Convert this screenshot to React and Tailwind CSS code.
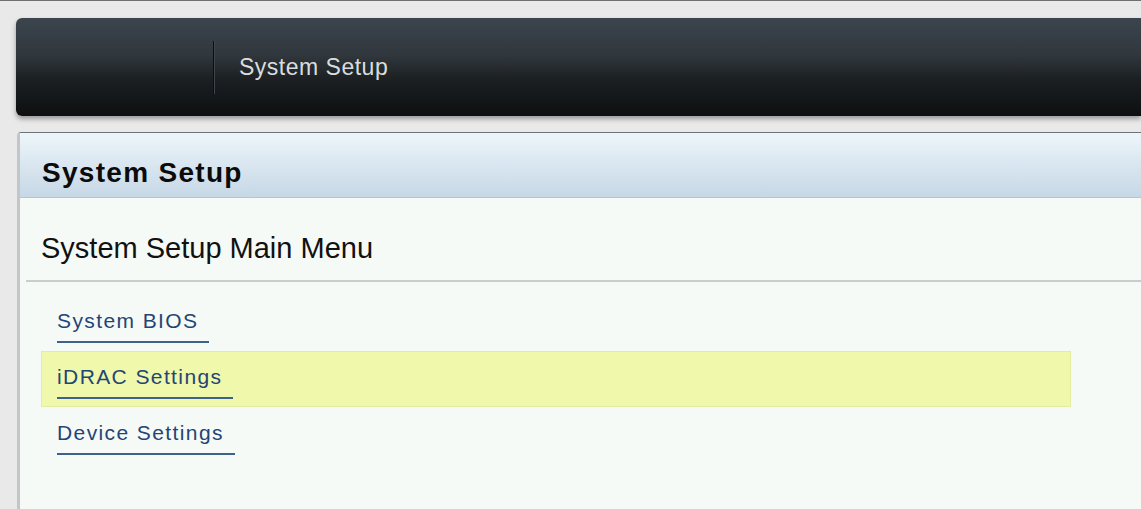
import React from "react";

const items = [
  { label: "System BIOS", active: false },
  { label: "iDRAC Settings", active: true },
  { label: "Device Settings", active: false },
];

function MenuItem({ label, active }) {
  return (
    <div
      className={
        active
          ? "h-[56px] w-[1030px] pl-[16px] pt-[14px] bg-[#eff8ab] outline outline-1 -outline-offset-1 outline-[#e3eda0]"
          : "h-[56px] w-[1030px] pl-[16px] pt-[14px]"
      }
    >
      <span className="inline-block pr-[11px] pb-[8px] border-b-2 border-[#3f628c] text-[21px] leading-[24px] tracking-[1.4px] text-[#234576]">
        {label}
      </span>
    </div>
  );
}

export default function App() {
  return (
    <div className="h-[509px] w-full overflow-hidden border-t border-[#6f6f6f] bg-[#e9e9e9] pl-[16px] pt-[17px] flex flex-col font-['Liberation_Sans',Arial,sans-serif]">
      {/* top dark bar */}
      <div className="h-[98px] shrink-0 rounded-l-[6px] bg-[linear-gradient(to_bottom,#3c454d_0%,#30373d_38%,#1c2023_62%,#0d0f10_100%)] shadow-[0_3px_5px_rgba(0,0,0,0.35)] flex items-center">
        <div className="w-[197px]" />
        <div className="h-[53px] w-[2px] border-l border-[#0c0e10] bg-[#3f464b]" />
        <span className="ml-[24px] text-[23px] leading-[26px] tracking-[0.5px] text-[#dadddf]">
          System Setup
        </span>
      </div>

      {/* panel */}
      <div className="mt-[16px] ml-[1px] flex-1 rounded-tl-[4px] border-l-[3px] border-t border-l-[#c2c6c9] border-t-[#6b747b] bg-[#f6faf7]">
        <div className="h-[65px] border-b border-[#b4c4d1] bg-[linear-gradient(to_bottom,#edf6fa,#c6d7e6)] pl-[22px] pt-[24px]">
          <h1 className="text-[28px] leading-[32px] font-bold tracking-[1.3px] text-[#0b0b0b]">
            System Setup
          </h1>
        </div>

        <div className="h-[84px] ml-[6px] border-b-2 border-[#c9cdcd] pl-[15px] pt-[34px]">
          <h2 className="text-[29px] leading-[33px] text-[#111]">System Setup Main Menu</h2>
        </div>

        <div className="pt-[13px] pl-[21px] flex flex-col">
          {items.map((it) => (
            <MenuItem key={it.label} label={it.label} active={it.active} />
          ))}
        </div>
      </div>
    </div>
  );
}
